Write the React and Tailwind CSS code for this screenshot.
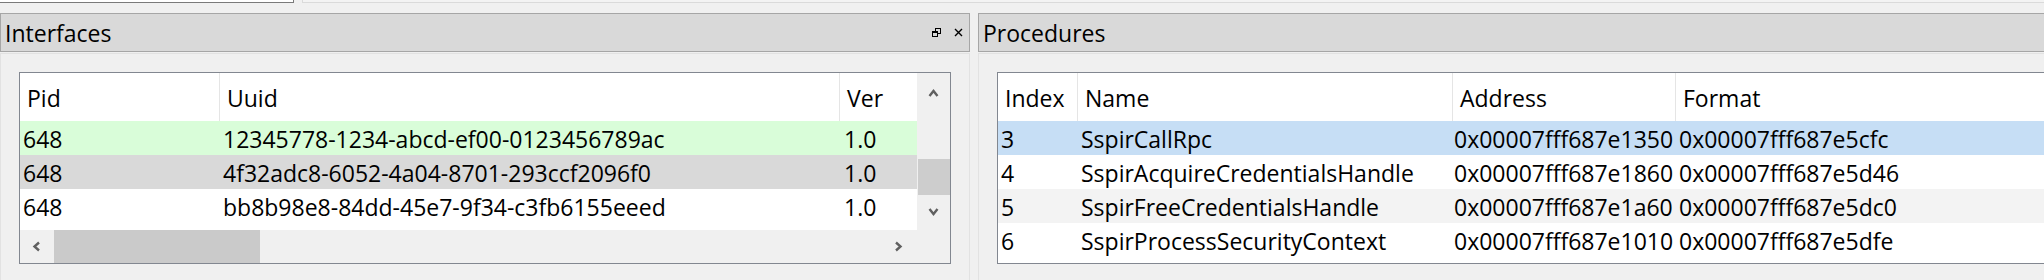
import React from "react";

const interfaces = [
    { pid: "648", uuid: "12345778-1234-abcd-ef00-0123456789ac", ver: "1.0", bg: "bg-[#d9fdd9]" },
    { pid: "648", uuid: "4f32adc8-6052-4a04-8701-293ccf2096f0", ver: "1.0", bg: "bg-[#d9d9d9]" },
    { pid: "648", uuid: "bb8b98e8-84dd-45e7-9f34-c3fb6155eeed", ver: "1.0", bg: "bg-white" },
];

const procedures = [
    { index: "3", name: "SspirCallRpc", address: "0x00007fff687e1350", format: "0x00007fff687e5cfc", bg: "bg-[#c6def5]" },
    { index: "4", name: "SspirAcquireCredentialsHandle", address: "0x00007fff687e1860", format: "0x00007fff687e5d46", bg: "bg-white" },
    { index: "5", name: "SspirFreeCredentialsHandle", address: "0x00007fff687e1a60", format: "0x00007fff687e5dc0", bg: "bg-[#f3f3f3]" },
    { index: "6", name: "SspirProcessSecurityContext", address: "0x00007fff687e1010", format: "0x00007fff687e5dfe", bg: "bg-white" },
];

function Chevron({ dir }) {
    // small scrollbar arrow, drawn like the windows ones
    const pts = {
        up: "1.5,8 5.5,3 9.5,8",
        down: "1.5,2 5.5,7 9.5,2",
        left: "7,1.5 2.5,5.5 7,9.5",
        right: "2,1.5 6.5,5.5 2,9.5",
    }[dir];
    return (
        <svg width="11" height="11" viewBox="0 0 11 11">
            <polyline points={pts} fill="none" stroke="#606060" strokeWidth="2.4" />
        </svg>
    );
}

function TitleBar({ title, controls }) {
    return (
        <div className="h-[39px] flex items-center border border-[#a6a6a6] bg-[#d9d9d9] pl-[4px] pr-[6px]">
            <span className="flex-1 leading-none pt-[2px]">{title}</span>
            {controls && (
                <div className="flex items-center gap-[13px]">
                    {/* float / restore */}
                    <svg width="9" height="9" viewBox="0 0 9 9">
                        <rect x="3.5" y="0.5" width="5" height="5" fill="none" stroke="#000" />
                        <rect x="0.5" y="3.5" width="5" height="5" fill="#d9d9d9" stroke="#000" />
                        <line x1="0" y1="4.5" x2="6" y2="4.5" stroke="#000" strokeWidth="1" />
                    </svg>
                    {/* close */}
                    <svg width="9" height="9" viewBox="0 0 9 9">
                        <path d="M1 1 L8 8 M8 1 L1 8" stroke="#000" strokeWidth="1.4" />
                    </svg>
                </div>
            )}
        </div>
    );
}

function HeaderCell({ label, w, last }) {
    return (
        <div className={`${w} h-full flex items-center pl-[7px] pt-[2px] shrink-0 ${last ? "" : "border-r border-[#e5e5e5]"}`}>
            {label}
        </div>
    );
}

export default function App() {
    return (
        <div className="w-[2044px] h-[280px] overflow-hidden bg-[#f0f0f0] text-black text-[23px] font-['Segoe_UI','Open_Sans',sans-serif]">
            {/* leftovers of the widgets above */}
            <div className="flex h-[3px]">
                <div className="w-[294px] bg-white border-r border-b border-[#7a7a7a]"></div>
                <div className="w-[8px]"></div>
                <div className="flex-1 bg-[#f3f3f3] border-l border-b border-[#dadada]"></div>
            </div>

            <div className="flex mt-[10px]">
                {/* Interfaces */}
                <div className="w-[970px] shrink-0 flex flex-col">
                    <TitleBar title="Interfaces" controls />
                    <div className="mt-[1px] border-t border-x border-[#e2e2e2] pl-[18px] pt-[18px] h-[230px]">
                        <div className="w-[932px] h-[192px] border border-[#828790] bg-white flex flex-col">
                            <div className="flex h-[157px]">
                                <div className="w-[897px] flex flex-col">
                                    <div className="flex h-[48px] shrink-0">
                                        <HeaderCell label="Pid" w="w-[200px]" />
                                        <HeaderCell label="Uuid" w="w-[620px]" />
                                        <HeaderCell label="Ver" w="flex-1" last />
                                    </div>
                                    {interfaces.map((row, i) => (
                                        <div key={i} className={`flex h-[34px] items-center pt-[2px] ${row.bg}`}>
                                            <div className="w-[200px] pl-[3px] shrink-0">{row.pid}</div>
                                            <div className="w-[620px] pl-[3px] shrink-0">{row.uuid}</div>
                                            <div className="flex-1 pl-[4px]">{row.ver}</div>
                                        </div>
                                    ))}
                                </div>
                                {/* vertical scrollbar */}
                                <div className="w-[33px] bg-[#f0f0f0] flex flex-col items-center">
                                    <div className="h-[36px] flex items-center justify-center pt-[4px]">
                                        <Chevron dir="up" />
                                    </div>
                                    <div className="h-[50px]"></div>
                                    <div className="w-[32px] h-[36px] bg-[#cdcdcd]"></div>
                                    <div className="flex-1 flex items-center justify-center">
                                        <Chevron dir="down" />
                                    </div>
                                </div>
                            </div>
                            <div className="h-[33px] mt-auto flex bg-[#f0f0f0]">
                                <div className="w-[34px] flex items-center justify-center">
                                    <Chevron dir="left" />
                                </div>
                                <div className="w-[206px] bg-[#cacaca]"></div>
                                <div className="flex-1 flex items-center justify-end pr-[12px]">
                                    <Chevron dir="right" />
                                </div>
                                <div className="w-[33px]"></div>
                            </div>
                        </div>
                    </div>
                </div>

                <div className="w-[8px] shrink-0"></div>

                {/* Procedures */}
                <div className="flex-1 flex flex-col">
                    <TitleBar title="Procedures" />
                    <div className="mt-[1px] border-t border-l border-[#e2e2e2] pl-[18px] pt-[18px] h-[230px]">
                        <div className="w-[1200px] h-[192px] border border-[#828790] bg-white flex flex-col">
                            <div className="flex h-[48px] shrink-0">
                                <HeaderCell label="Index" w="w-[80px]" />
                                <HeaderCell label="Name" w="w-[375px]" />
                                <HeaderCell label="Address" w="w-[223px]" />
                                <HeaderCell label="Format" w="flex-1" last />
                            </div>
                            {procedures.map((row, i) => (
                                <div key={i} className={`flex h-[34px] items-center pt-[2px] ${row.bg}`}>
                                    <div className="w-[80px] pl-[3px] shrink-0">{row.index}</div>
                                    <div className="w-[375px] pl-[3px] shrink-0">{row.name}</div>
                                    <div className="w-[223px] pl-[1px] shrink-0 whitespace-nowrap">{row.address}</div>
                                    <div className="flex-1 pl-[3px] whitespace-nowrap">{row.format}</div>
                                </div>
                            ))}
                        </div>
                    </div>
                </div>
            </div>
        </div>
    );
}
